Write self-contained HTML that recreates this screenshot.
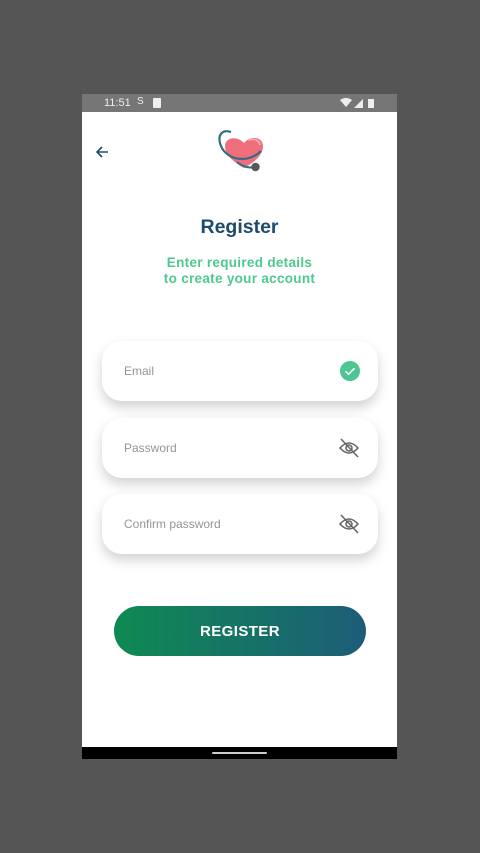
<!DOCTYPE html>
<html><head><meta charset="utf-8"><style>
*{margin:0;padding:0;box-sizing:border-box}
body{width:480px;height:853px;background:#555555;position:relative;overflow:hidden;font-family:"Liberation Sans",sans-serif}
.phone{position:absolute;left:82px;top:94px;width:315px;height:665px;background:#fff}
.sb{position:absolute;left:0;top:0;width:315px;height:18px;background:#767676;color:#eee;font-size:11px}
.nav{position:absolute;left:0;bottom:0;width:315px;height:12px;background:#000}
.nav i{position:absolute;left:130px;top:5px;width:55px;height:2px;background:#ccc;border-radius:1px}
.field{position:absolute;left:20px;width:276px;height:60px;background:#fff;border-radius:20px;box-shadow:0 6px 12px rgba(0,0,0,.18);font-size:12px;color:#959595;padding-left:22px;line-height:60px}
.field svg{position:absolute;right:18px;top:20px}
.btn{position:absolute;left:32px;top:512px;width:252px;height:50px;border-radius:25px;background:linear-gradient(90deg,#0f8a52,#1c5d78);color:#fff;font-weight:bold;font-size:15px;text-align:center;line-height:51px;letter-spacing:.4px}
</style></head><body>
<div class="phone">
 <div class="sb"><span style="position:absolute;left:22px;top:3px">11:51</span>
  <span style="position:absolute;left:55px;top:2px;font-size:10px">S</span>
  <span style="position:absolute;left:71px;top:4px;width:8px;height:10px;background:#eee;border-radius:1px"></span>
  <svg style="position:absolute;left:258px;top:4px" width="40" height="11"><path d="M0 2 Q6 -2 12 2 L6 9Z" fill="#eee"/><path d="M14 10 L23 1 L23 10Z" fill="#eee"/><rect x="28" y="1" width="6" height="9" fill="#eee"/></svg>
 </div>
 <svg style="position:absolute;left:12px;top:50px" width="16" height="16" viewBox="0 0 16 16"><path d="M14 8H3M8 3L3 8l5 5" stroke="#1d4f73" stroke-width="1.6" fill="none"/></svg>
 <svg style="position:absolute;left:136px;top:34px" width="50" height="48" viewBox="0 0 50 48">
  <path d="M26 40 C12 32 7 25 7 18 C7 10 18 7 26 15 C33 7 45 9 45 18 C45 27 38 33 26 40Z" fill="#ee6f7b"/>
  <path d="M30 12 C36 10 41 12 42 17" stroke="#f8a5ad" stroke-width="2" fill="none"/>
  <path d="M13 4 C4 1 0 7 2 15 C4 23 10 28 17 30 C27 33 37 29 43 23" stroke="#2f6d80" stroke-width="2.2" fill="none"/>
  <path d="M19 34 C26 40 33 40 37 39" stroke="#2f6d80" stroke-width="2" fill="none"/>
  <circle cx="37.5" cy="39" r="4.2" fill="#585858"/>
 </svg>
 <div style="position:absolute;left:0;width:315px;top:122px;text-align:center;font-weight:bold;font-size:19.5px;color:#1e4a6d">Register</div>
 <div style="position:absolute;left:0;width:315px;top:161px;text-align:center;font-weight:bold;font-size:13.5px;letter-spacing:.3px;line-height:16px;color:#4ec98d">Enter required details<br>to create your account</div>
 <div class="field" style="top:247px">Email<svg width="20" height="20"><circle cx="10" cy="10" r="10" fill="#4fc592"/><path d="M5.5 10.3l3 3 6-6" stroke="#fff" stroke-width="1.6" fill="none"/></svg></div>
 <div class="field" style="top:324px">Password<svg width="22" height="20" viewBox="0 0 22 20"><path d="M2 10 Q11 0 20 10 Q11 20 2 10Z" stroke="#666" stroke-width="1.6" fill="none"/><circle cx="11" cy="10" r="3" stroke="#666" stroke-width="1.6" fill="none"/><path d="M3 1L20 19" stroke="#666" stroke-width="1.6"/></svg></div>
 <div class="field" style="top:400px">Confirm password<svg width="22" height="20" viewBox="0 0 22 20"><path d="M2 10 Q11 0 20 10 Q11 20 2 10Z" stroke="#666" stroke-width="1.6" fill="none"/><circle cx="11" cy="10" r="3" stroke="#666" stroke-width="1.6" fill="none"/><path d="M3 1L20 19" stroke="#666" stroke-width="1.6"/></svg></div>
 <div class="btn">REGISTER</div>
 <div class="nav"><i></i></div>
</div>
</body></html>
